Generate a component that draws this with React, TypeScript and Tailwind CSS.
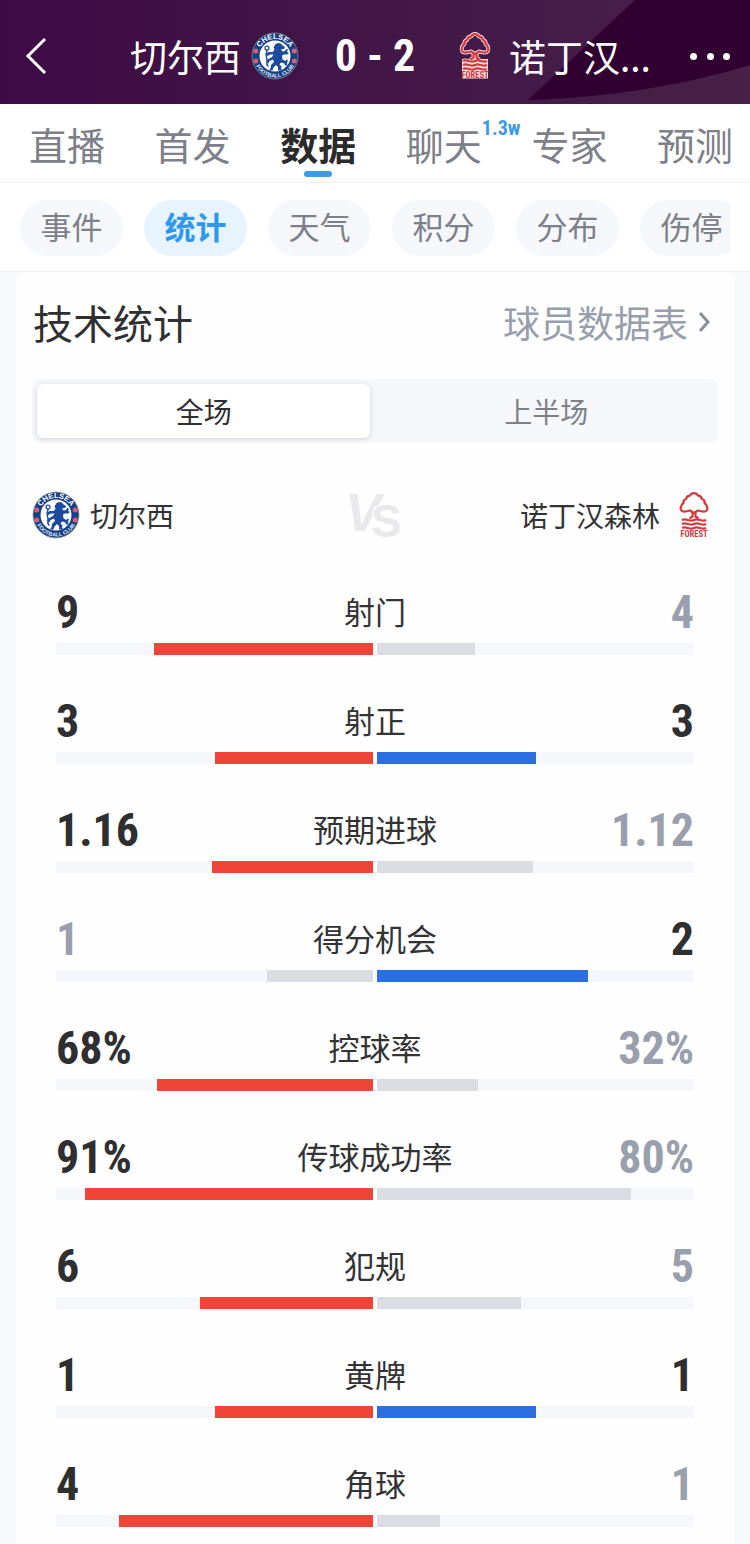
import React, { useState } from "react";

type Stat = { label: string; home: number; away: number; percent?: boolean };

const stats: Stat[] = [
  { label: "射门", home: 9, away: 4 },
  { label: "射正", home: 3, away: 3 },
  { label: "预期进球", home: 1.16, away: 1.12 },
  { label: "得分机会", home: 1, away: 2 },
  { label: "控球率", home: 68, away: 32, percent: true },
  { label: "传球成功率", home: 91, away: 80, percent: true },
  { label: "犯规", home: 6, away: 5 },
  { label: "黄牌", home: 1, away: 1 },
  { label: "角球", home: 4, away: 1 },
];

const tabs = ["直播", "首发", "数据", "聊天", "专家", "预测"];
const chips = ["事件", "统计", "天气", "积分", "分布", "伤停"];

const numeric = "font-['Roboto_Condensed','Liberation_Sans',sans-serif] font-bold";

function ChelseaCrest({ id }: { id: string }) {
  return (
    <svg viewBox="0 0 96 96" className="size-12 shrink-0" role="img" aria-label="切尔西">
      <defs>
        <path id={id + "-top"} d="M14 48a34 34 0 0 1 68 0" />
        <path id={id + "-bottom"} d="M5 48a43 43 0 0 0 86 0" />
      </defs>
      <circle cx="48" cy="48" r="46" fill="#173f86" stroke="#8d9a86" strokeWidth="1.5" />
      <circle cx="48" cy="48" r="31" fill="#fff" />
      <text fill="#fff" fontSize="15" fontWeight="700" fontFamily="Liberation Sans, sans-serif" textAnchor="middle">
        <textPath href={"#" + id + "-top"} startOffset="50%">CHELSEA</textPath>
      </text>
      <text fill="#dfe6f2" fontSize="11" fontWeight="700" fontFamily="Liberation Sans, sans-serif" textAnchor="middle">
        <textPath href={"#" + id + "-bottom"} startOffset="50%">FOOTBALL CLUB</textPath>
      </text>
      <g fill="#d0607f">
        <circle cx="9.500" cy="38" r="5" />
        <circle cx="9.500" cy="58" r="5" />
        <circle cx="86.500" cy="38" r="5" />
        <circle cx="86.500" cy="58" r="5" />
      </g>
      <path
        fill="#1d4a9c"
        d="M49 24l5-2 6 1 3 4 5 3-2 4-6 1 3 4 5-1 2-4 4 1-2 5 4 2-4 3-6 0-4 2 1 8 6 3 2-3 3 2-2 4 1 6-5 0-1-4-7-2-3 4 4 4-1 5 4 3h-10l0-7-4-4-5 5-2 6h-8l4-4 1-7 6-6-2-5-7 3-2 5-4-3 2-5 9-5 3-5-7 0-5 3-3-4 5-4 9 0 3-5-2-4z"
      />
      <path fill="none" stroke="#1d4a9c" strokeWidth="3" strokeLinecap="round" d="M34 68c-6-5 1-10-3-17-2-5-1-9 1-14" />
      <circle cx="32" cy="32" r="4" fill="none" stroke="#1d4a9c" strokeWidth="2.500" />
    </svg>
  );
}

function ForestShapes() {
  return (
    <>
      <path d="M13 41c-6 0-8-5-6-9 0-4 2-6 5-8-1-5 2-7 5-8 1-5 4-7 8-7 2-4 5-5 8-5s6 1 8 5c4 0 7 2 8 7 3 1 6 3 5 8 3 2 5 4 5 8 2 4 0 9-6 9-5 0-9-1-12-2l-8 5-8-5c-3 1-7 2-12 2z" />
      <path d="M30 43v8l-6 4M36 43v8l6 4" />
      <path d="M9 58c8-5 16 5 24 0s16 5 24 0M9 66c8-5 16 5 24 0s16 5 24 0M9 74c8-5 16 5 24 0s16 5 24 0" />
    </>
  );
}

function ForestCrest({ halo = false }: { halo?: boolean }) {
  return (
    <svg viewBox="-15 0 96 96" className="size-12 shrink-0" role="img" aria-label="诺丁汉森林">
      {halo && (
        <>
          <g fill="none" stroke="#f7dfe4" strokeWidth="8" strokeLinejoin="round">
            <ForestShapes />
          </g>
          <rect x="7" y="54" width="52" height="39" fill="#f7dfe4" />
        </>
      )}
      <g fill="none" stroke="#d23c40" strokeWidth="4.500" strokeLinejoin="round">
        <ForestShapes />
      </g>
      <text
        x="33"
        y="92"
        fill="#d23c40"
        fontSize="17"
        fontWeight="700"
        fontFamily="Roboto Condensed, sans-serif"
        textAnchor="middle"
      >
        FOREST
      </text>
    </svg>
  );
}

function StatRow({ stat }: { stat: Stat }) {
  const { label, home, away, percent } = stat;
  const total = percent ? 100 : home + away;
  const unit = percent ? "%" : "";
  const homeLeads = home >= away;
  const awayLeads = away >= home;
  return (
    <li>
      <div className="grid h-12 grid-cols-[1fr_auto_1fr] items-center">
        <span className={`${numeric} text-[46px] leading-12 ${homeLeads ? "text-[#2f2f31]" : "text-[#9a9fad]"}`}>
          {home}
          {unit}
        </span>
        <span className="pb-[2px] text-[31px] leading-[46px] text-[#333335]">{label}</span>
        <span className={`${numeric} text-right text-[46px] leading-12 ${awayLeads ? "text-[#2f2f31]" : "text-[#9a9fad]"}`}>
          {away}
          {unit}
        </span>
      </div>
      <div className="mt-[7px] grid h-3 grid-cols-2 gap-1">
        <div className="flex justify-end bg-[#f6f7fa]">
          <div className={homeLeads ? "bg-[#f04438]" : "bg-[#dcdde2]"} style={{ width: `${(home / total) * 100}%` }} />
        </div>
        <div className="flex bg-[#f6f7fa]">
          <div className={awayLeads ? "bg-[#2b6fe3]" : "bg-[#dcdde2]"} style={{ width: `${(away / total) * 100}%` }} />
        </div>
      </div>
    </li>
  );
}

export default function App() {
  const [tab, setTab] = useState("数据");
  const [chip, setChip] = useState("统计");
  const [half, setHalf] = useState("全场");

  return (
    <div className="flex min-h-screen flex-col bg-[#f6f8fb] font-['Noto_Sans_CJK_SC',sans-serif]">
      <header className="relative h-[104px] overflow-hidden bg-linear-to-r from-[#3d0a45] to-[#472149] text-white">
        <svg viewBox="0 0 222 104" preserveAspectRatio="none" className="absolute top-0 right-0 h-full w-[222px]" aria-hidden="true">
          <path d="M107 0H222V65C160 84 80 98 0 100z" fill="#2f0030" />
        </svg>
        <div className="relative grid h-full grid-cols-[1fr_152px_1fr] items-center pt-2">
          <div className="flex items-center justify-between pl-6">
            <button type="button" aria-label="返回" className="flex h-12 w-8 items-center">
              <svg viewBox="0 0 24 38" className="h-[38px] w-6" fill="none" stroke="#fff" strokeWidth="3">
                <path d="M21 2L4 19l17 17" />
              </svg>
            </button>
            <div className="flex items-center gap-[10px]">
              <span className="text-[37px] leading-12">切尔西</span>
              <ChelseaCrest id="header" />
            </div>
          </div>
          <h1 className={`${numeric} text-center text-[44px] leading-12`}>0 - 2</h1>
          <div className="flex items-center justify-between pr-5">
            <div className="flex items-center gap-[10px]">
              <ForestCrest halo />
              <span className="text-[37px] leading-12">诺丁汉...</span>
            </div>
            <button type="button" aria-label="更多" className="flex h-12 w-10 items-center justify-between">
              <span className="size-[7px] rounded-full bg-white" />
              <span className="size-[7px] rounded-full bg-white" />
              <span className="size-[7px] rounded-full bg-white" />
            </button>
          </div>
        </div>
      </header>

      <nav className="flex h-[79px] justify-between border-b border-[#f0f0f2] bg-white pr-[17px] pl-[29px]">
        {tabs.map((t) => (
          <button
            key={t}
            type="button"
            onClick={() => setTab(t)}
            className={`relative flex flex-col items-center pt-4 text-[38px] leading-12 ${
              t === tab ? "font-bold text-[#2b2b2d]" : "text-[#7d8088]"
            }`}
          >
            {t}
            {t === tab && <span className="absolute bottom-[5px] h-[6px] w-7 rounded-full bg-[#3b9bea]" />}
            {t === "聊天" && (
              <span className={`${numeric} absolute top-[14px] left-full text-[20px] leading-5 text-[#3b9bea]`}>1.3w</span>
            )}
          </button>
        ))}
      </nav>

      <div className="h-[89px] border-b border-[#f0f1f4] bg-white px-5 pt-[17px]">
        <div className="flex gap-[21px] overflow-hidden">
          {chips.map((c) => (
            <button
              key={c}
              type="button"
              onClick={() => setChip(c)}
              className={`h-14 w-[103px] shrink-0 rounded-full pb-1 text-[31px] leading-[52px] ${
                c === chip ? "bg-[#e7f4ff] font-bold text-[#2f97ee]" : "bg-[#f6f7fa] text-[#7d8088]"
              }`}
            >
              {c}
            </button>
          ))}
        </div>
      </div>

      <main className="mx-4 flex-1 rounded-t-lg bg-[#fefefe] pt-5 pb-4">
        <div className="flex items-center justify-between pr-6 pl-[17px]">
          <h2 className="text-[40px] leading-[60px] text-[#2f2f31]">技术统计</h2>
          <a href="#players" className="flex items-center gap-[10px] text-[37px] leading-[60px] text-[#989eac]">
            球员数据表
            <svg viewBox="0 0 12 20" className="h-5 w-3" fill="none" stroke="#8a8f9b" strokeWidth="3" aria-hidden="true">
              <path d="M2 1l8 9-8 9" />
            </svg>
          </a>
        </div>

        <div className="mx-4 mt-[27px] grid grid-cols-[33fr_34fr] gap-1 rounded-lg bg-[#f6f7fa] py-[5px] pl-[5px]">
          {["全场", "上半场"].map((h) => (
            <button
              key={h}
              type="button"
              onClick={() => setHalf(h)}
              className={`h-[54px] rounded-md text-[28px] leading-[54px] ${
                h === half ? "bg-white text-[#2f2f31] shadow-[0_1px_5px_#cfd2dc]" : "text-[#7d8088]"
              }`}
            >
              {h}
            </button>
          ))}
        </div>

        <div className="mt-[47px] grid grid-cols-[1fr_auto_1fr] items-center px-4 text-[28px] leading-12 text-[#333335]">
          <div className="flex items-center gap-[10px]">
            <ChelseaCrest id="teams" />
            <span>切尔西</span>
          </div>
          <svg
            viewBox="0 0 64 50"
            className="h-[50px] w-16"
            role="img"
            aria-label="VS"
            fill="#e9e9eb"
            fontFamily="Liberation Sans, sans-serif"
            fontWeight="700"
          >
            <text x="2" y="41" fontSize="54" fontStyle="italic">V</text>
            <text x="28" y="47" fontSize="46" stroke="#fefefe" strokeWidth="3" paintOrder="stroke">S</text>
          </svg>
          <div className="flex items-center justify-end gap-[10px]">
            <span>诺丁汉森林</span>
            <ForestCrest />
          </div>
        </div>

        <ul className="mt-12 flex flex-col gap-[42px] px-10">
          {stats.map((s) => (
            <StatRow key={s.label} stat={s} />
          ))}
        </ul>
      </main>
    </div>
  );
}
